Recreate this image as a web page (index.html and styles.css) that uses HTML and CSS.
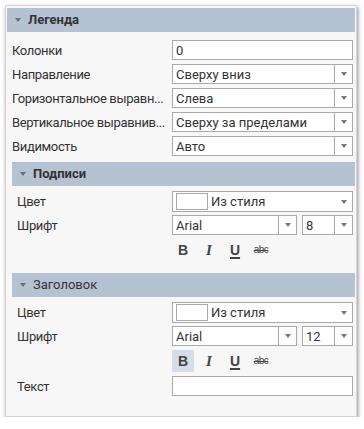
FILE: index.html
```html
<!DOCTYPE html>
<html lang="ru">
<head>
    <meta charset="UTF-8">
    <title>Легенда</title>
    <link rel="stylesheet" href="styles.css">
</head>
<body>
    <div class="panel">
        <div class="group-header"><span class="caret"></span>Легенда</div>
        <div class="rows">
            <div class="row">
                <div class="label">Колонки</div>
                <div class="field"><span class="value">0</span></div>
            </div>
            <div class="row">
                <div class="label">Направление</div>
                <div class="field combo"><span class="value">Сверху вниз</span><span class="drop"><span class="arrow"></span></span></div>
            </div>
            <div class="row">
                <div class="label" title="Горизонтальное выравнивание">Горизонтальное выравн...</div>
                <div class="field combo"><span class="value">Слева</span><span class="drop"><span class="arrow"></span></span></div>
            </div>
            <div class="row">
                <div class="label" title="Вертикальное выравнивание">Вертикальное выравнив...</div>
                <div class="field combo"><span class="value">Сверху за пределами</span><span class="drop"><span class="arrow"></span></span></div>
            </div>
            <div class="row">
                <div class="label">Видимость</div>
                <div class="field combo"><span class="value">Авто</span><span class="drop"><span class="arrow"></span></span></div>
            </div>
        </div>

        <div class="sub">
            <div class="group-header"><span class="caret"></span>Подписи</div>
            <div class="rows">
                <div class="row">
                    <div class="label">Цвет</div>
                    <div class="field combo color"><span class="swatch"></span><span class="value">Из стиля</span><span class="drop plain"><span class="arrow"></span></span></div>
                </div>
                <div class="row">
                    <div class="label">Шрифт</div>
                    <div class="font-pair">
                        <div class="field combo"><span class="value">Arial</span><span class="drop"><span class="arrow"></span></span></div>
                        <div class="field combo"><span class="value">8</span><span class="drop"><span class="arrow"></span></span></div>
                    </div>
                </div>
                <div class="row tools-row">
                    <div class="label"></div>
                    <div class="tools">
                        <span class="tool t-bold">B</span>
                        <span class="tool t-italic">I</span>
                        <span class="tool t-under">U</span>
                        <span class="tool t-strike">abc</span>
                    </div>
                </div>
            </div>
        </div>

        <div class="sub">
            <div class="group-header light"><span class="caret"></span>Заголовок</div>
            <div class="rows">
                <div class="row">
                    <div class="label">Цвет</div>
                    <div class="field combo color"><span class="swatch"></span><span class="value">Из стиля</span><span class="drop plain"><span class="arrow"></span></span></div>
                </div>
                <div class="row">
                    <div class="label">Шрифт</div>
                    <div class="font-pair">
                        <div class="field combo"><span class="value">Arial</span><span class="drop"><span class="arrow"></span></span></div>
                        <div class="field combo"><span class="value">12</span><span class="drop"><span class="arrow"></span></span></div>
                    </div>
                </div>
                <div class="row tools-row">
                    <div class="label"></div>
                    <div class="tools">
                        <span class="tool t-bold active">B</span>
                        <span class="tool t-italic">I</span>
                        <span class="tool t-under">U</span>
                        <span class="tool t-strike">abc</span>
                    </div>
                </div>
                <div class="row">
                    <div class="label">Текст</div>
                    <div class="field"></div>
                </div>
            </div>
        </div>
    </div>
</body>
</html>
```

FILE: styles.css
```css
body {
    margin: 0;
    background: #fff;
    font-family: Roboto, "Liberation Sans", sans-serif;
    font-size: 13px;
    color: #333;
}
.panel {
    box-sizing: border-box;
    width: 352px;
    height: 412px;
    margin: 5px 0 0 5px;
    padding: 2px 1px 0 1px;
    background: #f7f7f7;
    border: 1px solid #d4d4d4;
    box-shadow: 1px 2px 4px rgba(0,0,0,0.45);
}
.group-header {
    height: 24px;
    line-height: 24px;
    background: #b5c2d2;
    font-weight: bold;
    color: #333;
    padding-left: 8px;
}
.group-header.light {
    font-weight: normal;
}
.caret {
    display: inline-block;
    width: 0;
    height: 0;
    border-left: 3.5px solid transparent;
    border-right: 3.5px solid transparent;
    border-top: 4px solid #6f6f6f;
    vertical-align: middle;
    margin: -2px 7px 0 0;
}
.rows {
    display: flex;
    flex-direction: column;
    gap: 4px;
    padding: 8px 0 0 5px;
}
.row {
    display: grid;
    grid-template-columns: 160px 181px;
    align-items: center;
    height: 20px;
}
.sub {
    margin: 6px 0 0 5px;
}
.sub .rows {
    padding: 5px 0 0 5px;
}
.sub .row {
    grid-template-columns: 155px 181px;
}
.sub + .sub {
    margin-top: 12px;
}
.label {
    white-space: nowrap;
    letter-spacing: -0.35px;
}
.field {
    box-sizing: border-box;
    height: 20px;
    background: #fff;
    border: 1px solid #a9a9a9;
    display: flex;
    align-items: center;
}
.field .value {
    flex: 1;
    padding-left: 3px;
    white-space: nowrap;
    overflow: hidden;
}
.drop {
    width: 17px;
    height: 100%;
    border-left: 1px solid #a9a9a9;
    display: flex;
    align-items: center;
    justify-content: center;
}
.drop.plain {
    border-left: none;
}
.arrow {
    width: 0;
    height: 0;
    border-left: 3.5px solid transparent;
    border-right: 3.5px solid transparent;
    border-top: 4px solid #777;
}
.color {
    height: 21px;
}
.swatch {
    box-sizing: border-box;
    width: 32px;
    height: 17px;
    margin-left: 3px;
    border: 1px solid #a9a9a9;
    background: #fff;
}
.color .value {
    padding-left: 3px;
}
.font-pair {
    display: grid;
    grid-template-columns: 125px 51px;
    gap: 5px;
}
.tools-row {
    height: 22px;
}
.tools {
    display: flex;
    gap: 4px;
}
.tool {
    width: 22px;
    height: 22px;
    line-height: 22px;
    text-align: center;
    color: #444;
}
.tool.active {
    background: #d5dde8;
}
.t-bold {
    font-family: "Liberation Sans", sans-serif;
    font-weight: bold;
    font-size: 14px;
}
.t-italic {
    font-family: "Liberation Serif", serif;
    font-style: italic;
    font-weight: bold;
    font-size: 15px;
}
.t-under {
    font-family: "Liberation Sans", sans-serif;
    font-weight: bold;
    font-size: 14px;
    text-decoration: underline;
    text-underline-offset: 2px;
    text-decoration-thickness: 2px;
}
.t-strike {
    font-family: "Liberation Sans", sans-serif;
    font-size: 10px;
    text-decoration: line-through;
    letter-spacing: -0.5px;
}
```
